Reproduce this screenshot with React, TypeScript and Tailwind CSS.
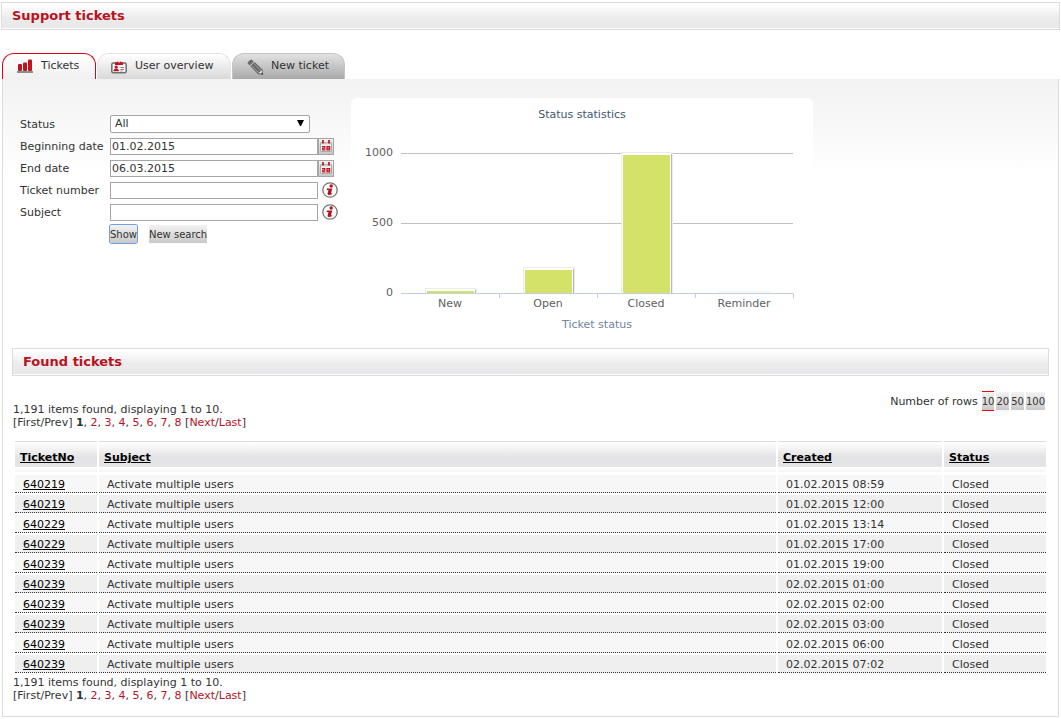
import React from 'react';

const tickets = [
  { no: '640219', created: '01.02.2015 08:59' },
  { no: '640219', created: '01.02.2015 12:00' },
  { no: '640229', created: '01.02.2015 13:14' },
  { no: '640229', created: '01.02.2015 17:00' },
  { no: '640239', created: '01.02.2015 19:00' },
  { no: '640239', created: '02.02.2015 01:00' },
  { no: '640239', created: '02.02.2015 02:00' },
  { no: '640239', created: '02.02.2015 03:00' },
  { no: '640239', created: '02.02.2015 06:00' },
  { no: '640239', created: '02.02.2015 07:02' },
];

const stats = [
  { label: 'New', height: 2 },
  { label: 'Open', height: 23 },
  { label: 'Closed', height: 138 },
  { label: 'Reminder', height: 0 },
];

const pages = [2, 3, 4, 5, 6, 7, 8];
const rowCounts = [20, 50, 100];

function ChartIcon() {
  return (
    <svg width="16" height="16" viewBox="0 0 16 16">
      <rect x="1" y="5" width="4" height="7" rx="1" fill="#bf1420" />
      <rect x="6" y="3.500" width="4" height="8.500" rx="1" fill="#bf1420" />
      <rect x="11" y="0.500" width="4" height="11.500" rx="1" fill="#bf1420" />
      <rect x="0" y="12" width="16" height="2" fill="#8c8c8c" />
    </svg>
  );
}

function BadgeIcon() {
  return (
    <svg width="17" height="16" viewBox="0 0 17 16">
      <rect x="1.800" y="4" width="14.400" height="9.800" rx="1.500" fill="#f4f4f4" stroke="#6e6e6e" strokeWidth="1.500" />
      <path d="M5 6V3.200h2a2.200 2.200 0 0 1 4 0h2V6z" fill="#bf1420" />
      <circle cx="9" cy="2.700" r="0.900" fill="#fff" />
      <circle cx="6.200" cy="8" r="1.600" fill="#bf1420" />
      <path d="M3.700 12.300v-1q0-1.800 2.500-1.800t2.500 1.800v1z" fill="#bf1420" />
      <path d="M10.500 8.500H14M10.500 10.500H14M10.500 12h2" stroke="#888" />
    </svg>
  );
}

function PencilIcon() {
  return (
    <svg width="18" height="17" viewBox="0 0 18 17">
      <path d="M0.500 4.500Q1 1.500 4.500 0.500l2.300 2-4 4z" fill="#6b6b6b" />
      <path d="M3.300 7.300 7.600 3 15.500 10.500l.7 5.500-5.400-1z" fill="#6b6b6b" />
      <path d="m4.800 7.200 7 6.600M7.200 4.900l7 6.600" stroke="#b9b9b9" strokeWidth="0.700" />
      <path d="m11.700 14 3-3 .7 3.800z" fill="#ddd" />
      <path d="m14 14.600 1.500-1.300.7 2.700z" fill="#444" />
    </svg>
  );
}

function CalendarIcon() {
  return (
    <svg width="14" height="14" viewBox="0 0 14 14">
      <rect x="1.500" y="3.500" width="11" height="9" rx="0.500" fill="#f1f1f1" stroke="#aaa" />
      <path d="M2 4.500h10" stroke="#ccc" strokeWidth="1.500" />
      <path d="M4 1v3.500M10 1v3.500" stroke="#c1121f" strokeWidth="1.700" />
      <path d="M3 7.500h2.800v1.700H3.700v1.600h2.800M8 7.500h2.700v3.300H8zM8 9.100h2.700" fill="none" stroke="#c1121f" strokeWidth="1.200" />
    </svg>
  );
}

function InfoIcon() {
  return (
    <svg width="16" height="16" viewBox="0 0 16 16">
      <circle cx="8" cy="8" r="7.200" fill="#fff" stroke="#777" strokeWidth="1.300" />
      <circle cx="9.200" cy="4" r="1.700" fill="#b3121d" />
      <path d="M4.800 6.500h5.500L9 11q-.1.900 1.700-.2-.7 2.300-3.400 2.300-2.200 0-1.700-1.900l.9-3.300H4.700z" fill="#b3121d" />
    </svg>
  );
}

function TitleBar({ children, className }: { children: React.ReactNode; className?: string }) {
  return (
    <div className={`h-7 border border-[#dcdcdc] bg-linear-to-b from-white from-5% via-[#ebebec] via-60% to-[#e8e8ea] px-2.5 text-[13px] leading-[26px] font-bold text-[#b9121e] shadow-[inset_0_-1px_0_#fff] ${className}`}>
      <h2>{children}</h2>
    </div>
  );
}

function Tabs() {
  return (
    <nav className="ml-0.5 flex h-[26px] gap-px leading-[22px]">
      <a href="#tickets" className="flex w-[94px] gap-2 rounded-t-xl border border-b-0 border-[#d3061c] bg-linear-to-b from-white to-[#f0f0f0] pt-px pl-3.5">
        <span className="pt-1"><ChartIcon /></span>
        Tickets
      </a>
      <a href="#users" className="flex w-[134px] gap-2 rounded-t-xl border border-b-0 border-[#e4e4e4] bg-linear-to-b from-white to-[#d9d9d9] pt-px pl-3">
        <span className="pt-1"><BadgeIcon /></span>
        User overview
      </a>
      <a href="#new" className="flex w-[113px] gap-1.5 rounded-t-xl border border-b-0 border-[#c4c4c4] bg-linear-to-b from-[#e2e2e2] to-[#a9a9a9] pt-px pl-3.5">
        <span className="pt-1"><PencilIcon /></span>
        New ticket
      </a>
    </nav>
  );
}

const inputClass = 'h-[17px] w-52 border border-[#a5a5a5] bg-white px-px';
const dateButtonClass = 'flex h-[17px] w-4 items-center justify-center border border-[#a5a5a5] bg-linear-to-b from-[#f2f2f2] to-[#c9c9c9]';
const buttonClass = 'bg-linear-to-b from-[#f2f2f2] to-[#c9c9c9] text-[10px]';

function SearchForm() {
  return (
    <form className="grid w-[330px] auto-rows-[22px] grid-cols-[90px_1fr] items-center pt-[34px]">
      <label htmlFor="status">Status</label>
      <div className="relative w-[200px]">
        <select id="status" className="block h-[18px] w-full appearance-none rounded-xs border border-[#a5a5a5] bg-white px-1 leading-4">
          <option>All</option>
        </select>
        <svg className="pointer-events-none absolute top-[5px] right-1.5" width="7" height="6" viewBox="0 0 7 6">
          <path d="M0 0h7L4 6H3z" fill="#000" />
        </svg>
      </div>
      <label htmlFor="from" className="whitespace-nowrap">Beginning date</label>
      <div className="flex">
        <input id="from" className={inputClass} defaultValue="01.02.2015" />
        <button type="button" aria-label="Pick beginning date" className={dateButtonClass}><CalendarIcon /></button>
      </div>
      <label htmlFor="to">End date</label>
      <div className="flex">
        <input id="to" className={inputClass} defaultValue="06.03.2015" />
        <button type="button" aria-label="Pick end date" className={dateButtonClass}><CalendarIcon /></button>
      </div>
      <label htmlFor="number">Ticket number</label>
      <div className="flex gap-1">
        <input id="number" className={inputClass} />
        <InfoIcon />
      </div>
      <label htmlFor="subject">Subject</label>
      <div className="flex gap-1">
        <input id="subject" className={inputClass} />
        <InfoIcon />
      </div>
      <div className="col-start-2 flex gap-3">
        <button type="button" className={`${buttonClass} h-[18px] rounded-xs ring-1 ring-[#6f9fe8]`}>Show</button>
        <button type="button" className={`${buttonClass} h-[18px]`}>New search</button>
      </div>
    </form>
  );
}

function StatusChart() {
  return (
    <svg className="mt-[19px] rounded-md bg-white" width="462" height="242" viewBox="0 0 462 242" fontSize="11" fill="#606060">
      <text x="231" y="20" textAnchor="middle" fill="#3e576f">Status statistics</text>
      <path d="M50 55.500h392M50 125.500h392" stroke="#c0c0c0" />
      <text x="42" y="58" textAnchor="end">1000</text>
      <text x="42" y="128" textAnchor="end">500</text>
      <text x="42" y="198" textAnchor="end">0</text>
      {stats.map((s, i) => (
        <g key={s.label}>
          {s.height > 0 ?
              (
                <>
                  <rect x={74 + i * 98} y={192 - s.height} width="52" height={s.height + 3} fill="#ececec" />
                  <rect x={75 + i * 98} y={194 - s.height} width="50" height={s.height + 1} fill="#b8b8b8" />
                  <rect x={75 + i * 98} y={193 - s.height} width="49" height={s.height + 2} fill="#fff" />
                  <rect x={76 + i * 98} y={195 - s.height} width="47" height={s.height} fill="#d5e26a" />
                </>
              ) :
              (
                <rect x={74 + i * 98} y="193" width="52" height="2" fill="#f6f6f6" />
              )}
          <text x={99 + i * 98} y="209" textAnchor="middle">{s.label}</text>
        </g>
      ))}
      <path d="M50 195.500h392.500v5M148.500 195v5M246.500 195v5M344.500 195v5" fill="none" stroke="#c0d0e0" />
      <text x="246" y="230" textAnchor="middle" fill="#6d869f">Ticket status</text>
    </svg>
  );
}

function Pager() {
  return (
    <div className="pl-px">
      <p>1,191 items found, displaying 1 to 10.</p>
      <p>
        [First/Prev] <strong>1</strong>
        {pages.map(p => (
          <React.Fragment key={p}>
            , <a href={`#page-${p}`} className="text-[#b9121e]">{p}</a>
          </React.Fragment>
        ))}
        {' '}[<a href="#next" className="text-[#b9121e]">Next</a>/<a href="#last" className="text-[#b9121e]">Last</a>]
      </p>
    </div>
  );
}

function TicketTable() {
  const cell = 'h-[18px] border-b border-dotted border-[#333] pt-0.5 pl-2';
  return (
    <table className="w-full table-fixed border-separate border-spacing-0.5">
      <colgroup>
        <col className="w-[82px]" />
        <col />
        <col className="w-[164px]" />
        <col className="w-[102px]" />
      </colgroup>
      <thead>
        <tr>
          {['TicketNo', 'Subject', 'Created', 'Status'].map(name => (
            <th key={name} className="p-0 text-left text-black">
              <div className="h-[26px] border-t border-[#dcdcdc] bg-linear-to-b from-white to-[#e4e4e6] to-60% pt-[9px] pl-[5px]">
                <a href="#sort" className="underline">{name}</a>
              </div>
              <div className="mb-px h-[5px] bg-linear-to-b from-white to-[#f5f5f5]" />
            </th>
          ))}
        </tr>
      </thead>
      <tbody>
        {tickets.map((t, i) => (
          <tr key={i} className="odd:bg-[#f7f7f7] even:bg-[#efefef]">
            <td className={cell}><a href="#ticket" className="text-black underline">{t.no}</a></td>
            <td className={cell}>Activate multiple users</td>
            <td className={cell}>{t.created}</td>
            <td className={cell}>Closed</td>
          </tr>
        ))}
      </tbody>
    </table>
  );
}

function App() {
  return (
    <div className="bg-white pt-0.5 pb-0.5 font-['DejaVu_Sans',sans-serif] text-[11px] leading-[13px] text-[#333]">
      <TitleBar className="mx-px mb-[23px]">Support tickets</TitleBar>
      <Tabs />
      <main className="mx-0.5 border border-t-0 border-[#dcdcdc] bg-linear-to-b from-[#f2f2f2] to-white to-[96px] px-[9px] pb-3.5">
        <div className="flex gap-px pl-2">
          <SearchForm />
          <StatusChart />
        </div>
        <TitleBar className="mt-2">Found tickets</TitleBar>
        <div className="flex items-start justify-between pt-[15px] pr-1">
          <div className="pt-3"><Pager /></div>
          <div className="flex items-center gap-0.5">
            <span className="pr-0.5">Number of rows</span>
            <button type="button" className={`${buttonClass} h-5 border-y border-[#f00]`}>10</button>
            {rowCounts.map(n => (
              <button type="button" key={n} className={`${buttonClass} h-[18px]`}>{n}</button>
            ))}
          </div>
        </div>
        <div className="mt-2.5 mr-px mb-px ml-px">
          <TicketTable />
        </div>
        <Pager />
      </main>
    </div>
  );
}

export default App;
